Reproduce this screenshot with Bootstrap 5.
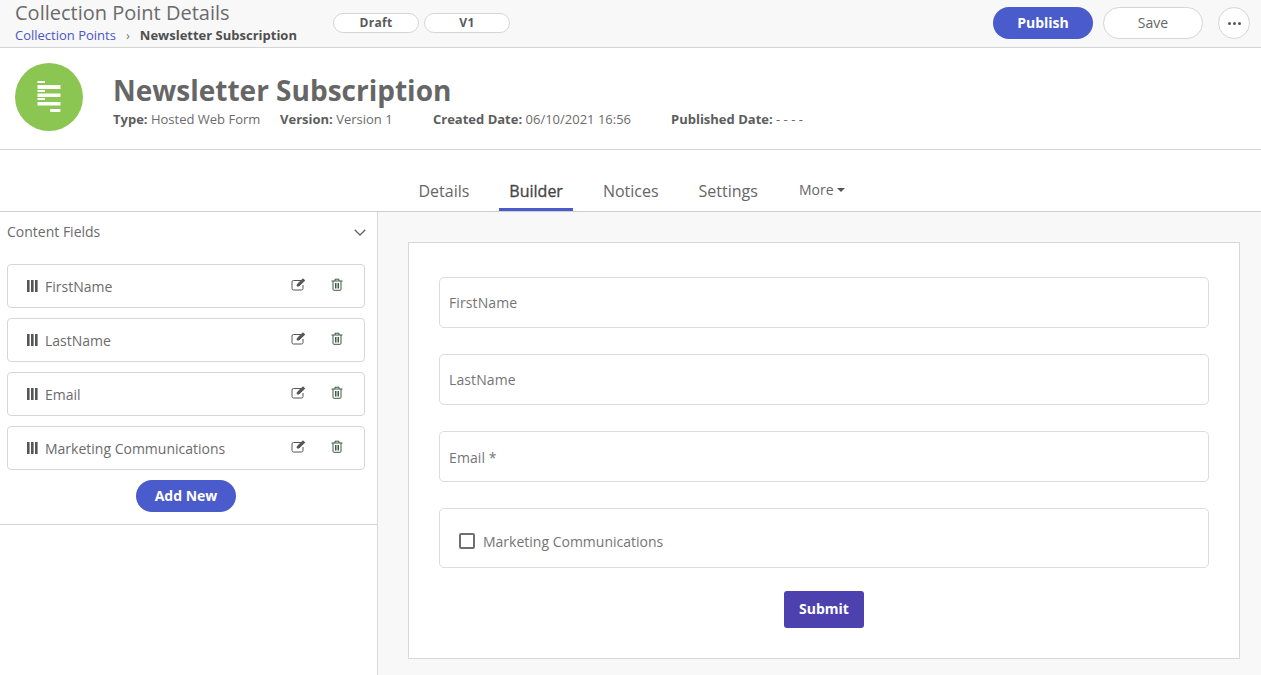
<!DOCTYPE html>
<html lang="en">
<head>
<meta charset="utf-8">
<title>Collection Point Details</title>
<link href="https://cdn.jsdelivr.net/npm/bootstrap@5.3.0/dist/css/bootstrap.min.css" rel="stylesheet">
<style>
html,body{height:675px;overflow:hidden}
body{font-family:"Open Sans",sans-serif;color:#696969;font-size:14px;background:#fff}
.topbar{height:48px;background:#f8f8f8;border-bottom:1px solid #d6d6d6;padding:0 11px 0 15px}
.titleblock{width:318px}
.pagetitle{font-size:20px;line-height:24px;color:#6b6b6b;margin:0;font-weight:400;padding-top:1px}
.crumbs{font-size:13px;line-height:18px;margin-top:1px}
.crumbs a{color:#4a55c9;text-decoration:none}
.crumbs .sep{margin:0 10px;color:#777;font-size:13px}
.crumbs b{color:#4f4f4f;font-weight:700}
.pilltag{width:86px;height:20px;border:1px solid #d6d6d6;border-radius:10px;background:#fff;font-size:12px;font-weight:700;line-height:18px;text-align:center;color:#5a5a5a;letter-spacing:.3px;margin-right:5px}
.tagsrow{padding-top:13px;align-self:flex-start}
.actionsrow{padding-bottom:1px}
.btnpublish{width:100px;height:32px;border-radius:16px;background:#4a5bcb;color:#fff;font-size:14px;font-weight:700;border:0;padding:0 0 2px;margin-right:10px}
.btnsave{width:100px;height:32px;border-radius:16px;background:#fff;color:#666;font-size:14px;border:1px solid #d6d6d6;padding:0 0 2px;margin-right:15px}
.btnmore{width:32px;height:32px;border-radius:50%;background:#fff;border:1px solid #d6d6d6;padding:0;display:flex;align-items:center;justify-content:center;gap:2px}
.btnmore i{display:block;width:3px;height:3px;border-radius:50%;background:#555}
.headrow{height:102px;border-bottom:1px solid #d4d4d4;padding:15px 15px 0}
.logocircle{width:68px;height:68px;border-radius:50%;background:#8bc552;flex:none;display:flex;align-items:center;justify-content:center;margin-right:30px}
.bigname{font-size:28px;font-weight:700;color:#666;line-height:34px;margin:10px 0 0}
.metarow{font-size:13px;line-height:17px;color:#6b6b6b;margin-top:4px}
.metarow b{color:#5d5d5d;font-weight:700}
.metarow span.mi{display:inline-block}
.mi1{width:167px}.mi2{width:153px}.mi3{width:238px}
.tabrow{height:62px;border-bottom:1px solid #cfcfcf;justify-content:center;padding-left:2px}
.tabitem{height:61px;display:flex;align-items:flex-end;font-size:16px;color:#666;padding:0 10px 5px;text-decoration:none;line-height:24px;margin-right:20px;border-bottom:3px solid transparent}
.tabitem.on{color:#444;border-bottom-color:#4a5bcb;font-weight:500;-webkit-text-stroke:.3px #444}
.tabmore{font-size:14px;margin-right:0;margin-left:1px;padding-bottom:6px}
.caretd{display:inline-block;border-left:4px solid transparent;border-right:4px solid transparent;border-top:4px solid #555;margin-left:3px;vertical-align:3px}
.mainrow{height:463px}
.sidepane{width:378px;flex:none;border-right:1px solid #d8d8d8}
.sidehead{height:40px;padding:0 11px 0 7px;font-size:14px;line-height:40px;color:#6b6b6b}
.fieldlist{padding:12px 12px 10px 7px;border-bottom:1px solid #d4d4d4;height:273px;box-sizing:border-box}
.fielditem{height:44px;border:1px solid #d6d6d6;border-radius:4px;margin-bottom:10px;padding:0 21px 0 19px;font-size:14px;color:#6b6b6b}
.fieldname{margin-left:7px;flex:1;padding-top:1px}
.iconedit{margin-right:25px;margin-top:-4px}
.icontrash{margin-top:-4px}
.btnaddnew{width:100px;height:32px;border-radius:16px;background:#4a5bcb;color:#fff;font-size:14px;font-weight:700;border:0;padding:0 0 2px;display:block;margin:0 auto}
.canvaspane{flex:1;background:#f8f8f8;padding:30px 21px 0 30px}
.formcard{background:#fff;border:1px solid #d8d8d8;height:417px;padding:34px 30px 0}
.fakeinput{height:51px;border:1px solid #dcdcdc;border-radius:5px;margin-bottom:26px;padding:0 9px;font-size:14px;color:#757575;line-height:49px;letter-spacing:.1px;background:#fff}
.fakeinput.lowerlabel{line-height:51px}
.checkbox-wrap{height:60px;border:1px solid #dcdcdc;border-radius:5px;padding:6px 19px 0;font-size:14px;color:#757575;background:#fff}
.fakecheck{width:16px;height:16px;border:2px solid #707070;border-radius:2px;margin-right:8px;flex:none}
.btnsubmit{width:80px;height:37px;background:#4c41ae;color:#fff;border:0;border-radius:3px;font-weight:700;font-size:14px;padding:0 0 2px;display:block;margin:23px auto 0}
</style>
</head>
<body>
<div class="topbar d-flex align-items-center">
  <div class="titleblock align-self-start">
    <h1 class="pagetitle">Collection Point Details</h1>
    <div class="crumbs"><a href="#">Collection Points</a><span class="sep">›</span><b>Newsletter Subscription</b></div>
  </div>
  <div class="tagsrow d-flex">
    <div class="pilltag">Draft</div>
    <div class="pilltag">V1</div>
  </div>
  <div class="actionsrow ms-auto d-flex align-items-center">
    <button class="btnpublish" type="button">Publish</button>
    <button class="btnsave" type="button">Save</button>
    <button class="btnmore" type="button" aria-label="More"><i></i><i></i><i></i></button>
  </div>
</div>

<div class="headrow d-flex">
  <div class="logocircle">
    <svg width="26" height="32" viewBox="0 0 26 32" fill="#fff"><rect x="1.5" y="0" width="7.5" height="2"/><rect x="1.5" y="4" width="23" height="4"/><rect x="1.5" y="9" width="7.5" height="2"/><rect x="1.5" y="12.5" width="23" height="3.5"/><rect x="1.5" y="17" width="7.5" height="2"/><rect x="1.5" y="21" width="23" height="3.5"/><rect x="14" y="28" width="10.5" height="3" rx="1"/></svg>
  </div>
  <div>
    <h2 class="bigname">Newsletter Subscription</h2>
    <div class="metarow"><span class="mi mi1"><b>Type:</b> Hosted Web Form</span><span class="mi mi2"><b>Version:</b> Version 1</span><span class="mi mi3"><b>Created Date:</b> 06/10/2021 16:56</span><span class="mi"><b>Published Date:</b> - - - -</span></div>
  </div>
</div>

<div class="tabrow d-flex">
  <a class="tabitem" href="#">Details</a>
  <a class="tabitem on" href="#">Builder</a>
  <a class="tabitem" href="#">Notices</a>
  <a class="tabitem" href="#">Settings</a>
  <a class="tabitem tabmore" href="#"><span>More<span class="caretd"></span></span></a>
</div>

<div class="mainrow d-flex">
  <aside class="sidepane">
    <div class="sidehead d-flex justify-content-between align-items-center">
      <span>Content Fields</span>
      <svg width="12" height="7" viewBox="0 0 12 7" fill="none" stroke="#666" stroke-width="1.3"><path d="M.7.7 6 6 11.3.7"/></svg>
    </div>
    <div class="fieldlist">
      <div class="fielditem d-flex align-items-center"><svg width="11" height="12" viewBox="0 0 11 12" fill="#555"><rect width="2.6" height="12"/><rect x="4" width="2.6" height="12"/><rect x="8" width="2.6" height="12"/></svg><span class="fieldname">FirstName</span><svg class="iconedit" width="15" height="13" viewBox="0 0 15 13" fill="none" stroke="#555"><path d="M10 2.5H2.5A1.5 1.5 0 0 0 1 4v6.5A1.5 1.5 0 0 0 2.5 12h8a1.5 1.5 0 0 0 1.5-1.5V7"/><path d="M6 8l.5-2L12 .8l1.8 1.7L8 8z" fill="#555"/></svg><svg class="icontrash" width="12" height="13" viewBox="0 0 12 13" fill="none" stroke="#3f5a42"><path d="M.5 3h11M4 3V1.2h4V3M2 3v8.3a1 1 0 0 0 1 1h6a1 1 0 0 0 1-1V3M4.5 5v5.5M6 5v5.5M7.5 5v5.5"/></svg></div>
      <div class="fielditem d-flex align-items-center"><svg width="11" height="12" viewBox="0 0 11 12" fill="#555"><rect width="2.6" height="12"/><rect x="4" width="2.6" height="12"/><rect x="8" width="2.6" height="12"/></svg><span class="fieldname">LastName</span><svg class="iconedit" width="15" height="13" viewBox="0 0 15 13" fill="none" stroke="#555"><path d="M10 2.5H2.5A1.5 1.5 0 0 0 1 4v6.5A1.5 1.5 0 0 0 2.5 12h8a1.5 1.5 0 0 0 1.5-1.5V7"/><path d="M6 8l.5-2L12 .8l1.8 1.7L8 8z" fill="#555"/></svg><svg class="icontrash" width="12" height="13" viewBox="0 0 12 13" fill="none" stroke="#3f5a42"><path d="M.5 3h11M4 3V1.2h4V3M2 3v8.3a1 1 0 0 0 1 1h6a1 1 0 0 0 1-1V3M4.5 5v5.5M6 5v5.5M7.5 5v5.5"/></svg></div>
      <div class="fielditem d-flex align-items-center"><svg width="11" height="12" viewBox="0 0 11 12" fill="#555"><rect width="2.6" height="12"/><rect x="4" width="2.6" height="12"/><rect x="8" width="2.6" height="12"/></svg><span class="fieldname">Email</span><svg class="iconedit" width="15" height="13" viewBox="0 0 15 13" fill="none" stroke="#555"><path d="M10 2.5H2.5A1.5 1.5 0 0 0 1 4v6.5A1.5 1.5 0 0 0 2.5 12h8a1.5 1.5 0 0 0 1.5-1.5V7"/><path d="M6 8l.5-2L12 .8l1.8 1.7L8 8z" fill="#555"/></svg><svg class="icontrash" width="12" height="13" viewBox="0 0 12 13" fill="none" stroke="#3f5a42"><path d="M.5 3h11M4 3V1.2h4V3M2 3v8.3a1 1 0 0 0 1 1h6a1 1 0 0 0 1-1V3M4.5 5v5.5M6 5v5.5M7.5 5v5.5"/></svg></div>
      <div class="fielditem d-flex align-items-center"><svg width="11" height="12" viewBox="0 0 11 12" fill="#555"><rect width="2.6" height="12"/><rect x="4" width="2.6" height="12"/><rect x="8" width="2.6" height="12"/></svg><span class="fieldname">Marketing Communications</span><svg class="iconedit" width="15" height="13" viewBox="0 0 15 13" fill="none" stroke="#555"><path d="M10 2.5H2.5A1.5 1.5 0 0 0 1 4v6.5A1.5 1.5 0 0 0 2.5 12h8a1.5 1.5 0 0 0 1.5-1.5V7"/><path d="M6 8l.5-2L12 .8l1.8 1.7L8 8z" fill="#555"/></svg><svg class="icontrash" width="12" height="13" viewBox="0 0 12 13" fill="none" stroke="#3f5a42"><path d="M.5 3h11M4 3V1.2h4V3M2 3v8.3a1 1 0 0 0 1 1h6a1 1 0 0 0 1-1V3M4.5 5v5.5M6 5v5.5M7.5 5v5.5"/></svg></div>
      <button class="btnaddnew" type="button">Add New</button>
    </div>
  </aside>
  <main class="canvaspane">
    <div class="formcard">
      <div class="fakeinput">FirstName</div>
      <div class="fakeinput">LastName</div>
      <div class="fakeinput lowerlabel">Email *</div>
      <div class="checkbox-wrap d-flex align-items-center"><span class="fakecheck"></span><span>Marketing Communications</span></div>
      <button class="btnsubmit" type="button">Submit</button>
    </div>
  </main>
</div>
<script src="https://cdn.jsdelivr.net/npm/bootstrap@5.3.0/dist/js/bootstrap.bundle.min.js"></script>
</body>
</html>
